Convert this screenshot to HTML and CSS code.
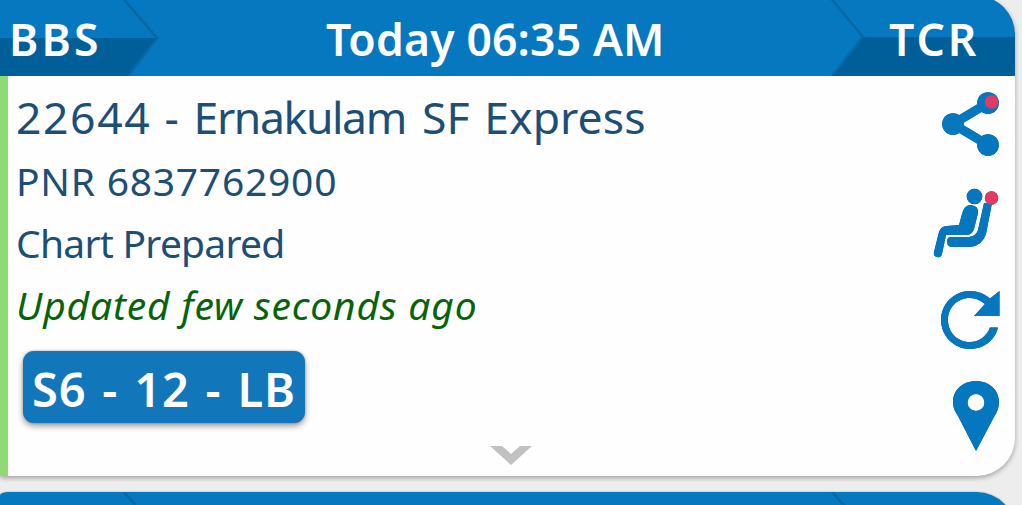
FILE: index.html
```html
<!DOCTYPE html>
<html lang="en">
<head>
<meta charset="utf-8">
<title>My trips</title>
<link rel="stylesheet" href="styles.css">
</head>
<body>
<main class="trips">
  <article class="card">
    <header class="route">
      <svg class="route-art" viewBox="0 0 1015 80" aria-hidden="true">
        <path class="shade" d="M0 42H157L128 80H0Z"/>
        <path class="shade" d="M863 41H1015V80H832Z"/>
        <path class="crease" d="M121 0L157 42L128 80M829 0L863 41L832 80"/>
      </svg>
      <span class="station from">BBS</span>
      <span class="departure">Today 06:35 AM</span>
      <span class="station to">TCR</span>
    </header>
    <div class="body">
      <div class="details">
        <h1 class="train"><span class="number">22644 - </span><span class="name">Ernakulam </span><span class="service">SF Express</span></h1>
        <p class="line pnr">PNR 6837762900</p>
        <p class="line status">Chart Prepared</p>
        <p class="line updated">Updated few seconds ago</p>
        <div class="seat"><span class="seat-text">S6 - 12 - LB</span></div>
      </div>
      <nav class="actions">
        <svg class="icon" width="62" height="70" viewBox="938 90 62 70">
          <path class="stroke" d="M988 103L953 124L988 145"/>
          <circle cx="988" cy="103" r="10.800"/><circle cx="953" cy="124" r="10.800"/><circle cx="988" cy="145" r="10.800"/>
          <circle class="dot" cx="991.500" cy="102" r="6.700"/>
        </svg>
        <svg class="icon" width="70" height="74" viewBox="932 186 70 74">
          <circle cx="974.500" cy="196.500" r="7.800"/>
          <path d="M962 214Q964 205 971 205Q979 206 978 213L974 229Q972 235 966 235H946L942 254Q941 258 937 257Q933 256 934 252L939 232Q941 226 947 226L959 225Z"/>
          <path d="M984 203L992 203L986 234Q982 246 970 247H951Q947 246 947 242Q947 237 951 237H969Q976 236 978 230Z"/>
          <circle class="dot" cx="991.500" cy="198" r="6.700"/>
        </svg>
        <svg class="icon" width="64" height="66" viewBox="938 286 64 66">
          <path d="M998 327.500C995 340 984 349 970 349C954 349 941 336 941 320C941 304 954 291 970 291C978 291 985 294 990 298.500L999.500 291V316H974L985 304C981 301 976 298 970 298C957 298 948 308 948 320C948 332 957 342 970 342C979 342 987 336 990 327.500Z"/>
        </svg>
        <svg class="icon" width="52" height="78" viewBox="950 376 52 78">
          <path fill-rule="evenodd" d="M976 451L958 416C955 411 953 408 953 402C953 390 963 381 976 381C989 381 999 390 999 402C999 408 997 412 994 417ZM984.500 402.500A8.500 8.500 0 1 0 967.500 402.500A8.500 8.500 0 1 0 984.500 402.500Z"/>
        </svg>
      </nav>
    </div>
    <svg class="expand" width="42" height="19" viewBox="0 0 42 19"><path d="M0 0H12L21 8L30 0H42L21 19Z"/></svg>
  </article>
  <article class="card next">
    <header class="route">
      <svg class="route-art" viewBox="0 0 1015 80" aria-hidden="true">
        <path class="crease" d="M124 0L157 38M832 0L866 38"/>
      </svg>
    </header>
  </article>
</main>
</body>
</html>
```
FILE: styles.css
```css
* { box-sizing: border-box; }
html, body { height: 100%; }
body {
  margin: 0;
  overflow: hidden;
  background: #ededed;
  font-family: "Noto Sans", "Open Sans", sans-serif;
}
.trips {
  height: 505px;
  overflow: hidden;
  display: flex;
  flex-direction: column;
  gap: 16px;
}
.card {
  position: relative;
  flex: none;
  width: 1015px;
  height: 480px;
  margin-top: -4px;
  overflow: hidden;
  background: #fefefe;
  border-radius: 0 38px 38px 0;
  box-shadow: 0 2px 5px rgba(0, 0, 0, .32);
}
.card.next { margin-top: 0; border-radius: 8px 38px 0 0 / 3px 38px 0 0; box-shadow: 0 0 2px rgba(0, 0, 0, .3); }
.route {
  position: relative;
  height: 80px;
  padding-top: 4px;
  display: grid;
  grid-template-columns: 157px 1fr 152px;
  align-items: center;
  background: #0578bf;
  color: #fff;
  font-size: 44.500px;
  font-weight: 600;
  line-height: 76px;
  white-space: nowrap;
}
.route-art { position: absolute; inset: 0; width: 1015px; height: 80px; }
.shade { fill: #005f98; }
.crease { fill: none; stroke: #0768a3; stroke-width: 2.500; }
.station, .departure { position: relative; top: 1px; }
.from { padding-left: 9px; letter-spacing: 3.200px; }
.departure { padding-left: 169px; letter-spacing: .150px; }
.to { padding-left: 26px; letter-spacing: 3px; }
.body {
  display: flex;
  justify-content: space-between;
  height: 400px;
  border-left: 8px solid #8fda77;
}
.details { padding: 11px 0 0 8px; white-space: nowrap; color: #1d4f76; }
.train { margin: 0; font-size: 44.500px; font-weight: 400; line-height: 60px; }
.number { letter-spacing: 1.600px; }
.name { letter-spacing: -1.400px; word-spacing: 6px; }
.service { letter-spacing: .050px; word-spacing: 3px; }
.line { margin: 0; font-size: 39px; line-height: 62px; }
.pnr { margin-top: 3px; letter-spacing: .750px; }
.status { letter-spacing: -.750px; }
.updated { color: #076307; font-style: italic; letter-spacing: .800px; }
.seat {
  margin: 15px 0 0 7px;
  width: 282px;
  height: 72px;
  padding-left: 9px;
  border-radius: 11px;
  background: #1276bb;
  box-shadow: 0 3px 6px rgba(0, 0, 0, .4), 0 0 2px rgba(0, 0, 0, .3);
  color: #fff;
  font-size: 47px;
  font-weight: 600;
  line-height: 76px;
  letter-spacing: .800px;
  word-spacing: 3px;
}
.actions {
  width: 84px;
  padding-top: 14px;
  display: flex;
  flex-direction: column;
  align-items: flex-end;
  padding-right: 13px;
}
.icon { flex: none; display: block; fill: #0577be; filter: drop-shadow(0 0 .5px #055f98); }
.icon:nth-child(1) { margin-right: 2px; }
.icon:nth-child(2) { margin-top: 26px; }
.icon:nth-child(3) { margin-top: 26px; }
.icon:nth-child(4) { margin-top: 24px; }
.stroke { fill: none; stroke: #0577be; stroke-width: 9; }
.dot { fill: #e23a62; }
.expand { position: absolute; left: 490px; top: 450px; fill: #c1c1c1; }
```
